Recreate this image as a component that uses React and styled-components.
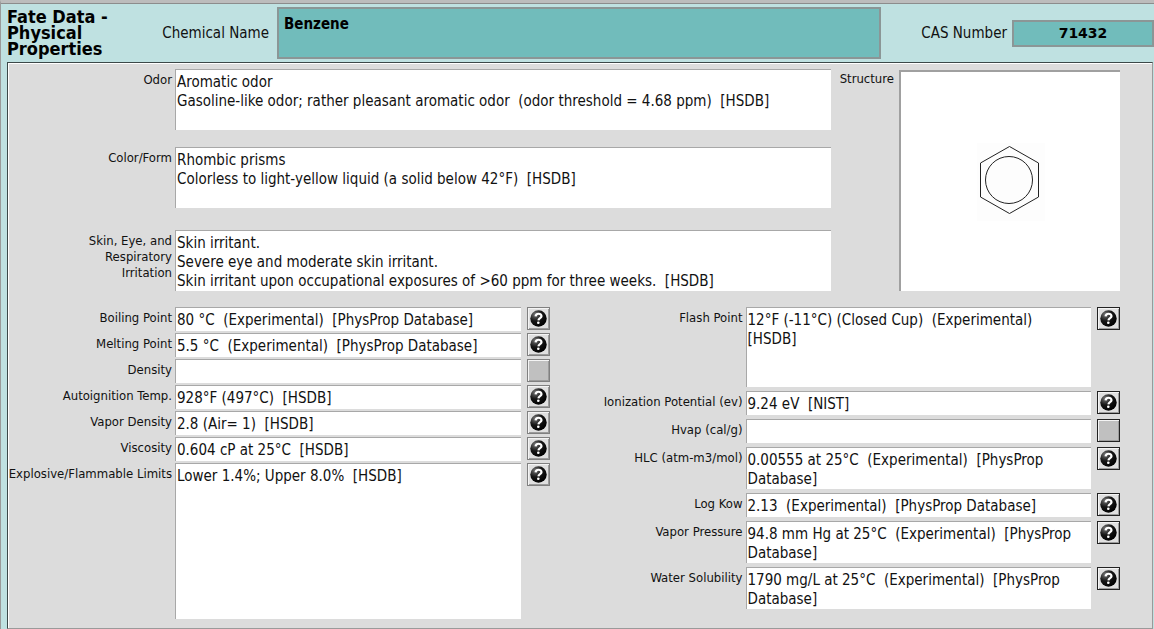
import React from "react";
import styled, { createGlobalStyle } from "styled-components";

const GlobalStyle = createGlobalStyle`
  * {
    box-sizing: border-box;
  }
  body {
    margin: 0;
    background-color: #bfe1e1;
    color: #111;
    font-family: "DejaVu Sans Condensed", "Noto Sans", sans-serif;
    font-size: 15px;
  }
  button,
  input,
  textarea {
    margin: 0;
    font: inherit;
    color: inherit;
  }
`;
const Window = styled.main`
  min-height: 100vh;
  display: flex;
  flex-direction: column;
  background-color: #bfe1e1;
  border-top: 3px solid #bcbcbc;
  border-left: 1px solid #9a9a9a;
`;
const Header = styled.header`
  display: flex;
  align-items: center;
  height: 59px;
  padding-left: 6px;
  border-top: 1px solid #8c8c8c;
`;
const Title = styled.h1`
  width: 140px;
  margin: 0;
  font-size: 18px;
  line-height: 16px;
  font-weight: bold;
  color: #000;
`;
const HeaderLabel = styled.label`
  width: ${({ $width }) => $width};
  font-size: 15px;
  text-align: right;
  white-space: nowrap;
`;
const HeaderField = styled.input`
  min-width: 0;
  border: 2px solid #8b9696;
  border-radius: 0;
  outline: none;
  background-color: #71bcbb;
  font-weight: bold;
  color: #000;
`;
const NameField = styled(HeaderField)`
  flex: 1;
  height: 52px;
  margin-left: 8px;
  padding: 0 5px 18px;
`;
const CasField = styled(HeaderField)`
  flex: 0 0 142px;
  height: 27px;
  margin-left: 5px;
  padding: 0;
  font-family: "DejaVu Sans", sans-serif;
  font-size: 14px;
  text-align: center;
`;
const Panel = styled.section`
  flex: 1;
  display: flex;
  flex-direction: column;
  gap: 16px;
  margin-left: 6px;
  margin-right: 1px;
  padding: 6px 32px 9px 0;
  background-color: #dcdcdc;
  border: 1px solid #9a9a9a;
  border-top: 1px solid #3c4848;
  border-left: 1px solid #3c4848;
  box-shadow: inset 1px 1px 0 #fff;
`;
const Columns = styled.div`
  display: flex;
`;
const Descriptions = styled.div`
  flex: 1;
  display: flex;
  flex-direction: column;
  gap: ${({ $gap }) => $gap};
`;
const Properties = styled.div`
  flex: 1 1 ${({ $basis }) => $basis};
  display: flex;
  flex-direction: column;
  gap: ${({ $gap }) => $gap};
`;
const Row = styled.div`
  display: flex;
  align-items: flex-start;
`;
const Label = styled.label`
  flex: none;
  width: ${({ $width }) => $width};
  padding: 3px 3px 0 0;
  font-size: 13px;
  line-height: 16px;
  text-align: right;
  white-space: pre-line;
`;
const Input = styled.input`
  flex: 1;
  min-width: 0;
  height: 24px;
  padding: 0 1px;
  border: 0;
  border-top: 1px solid #a8a8a8;
  border-left: 1px solid #a8a8a8;
  border-radius: 0;
  outline: none;
  background-color: #fff;
`;
const TextArea = styled.textarea`
  flex: 1;
  min-width: 0;
  padding: 3px 1px 0;
  border: 0;
  border-top: 1px solid #a8a8a8;
  border-left: 1px solid #a8a8a8;
  border-radius: 0;
  outline: none;
  resize: none;
  overflow: hidden;
  line-height: 19px;
  background-color: #fff;
`;
const HelpButton = styled.button`
  flex: none;
  display: flex;
  align-items: center;
  justify-content: center;
  width: 23px;
  height: 23px;
  margin-left: 6px;
  padding: 0;
  border: 1px solid ${({ $dark }) => ($dark ? "#222" : "#808080")};
  border-radius: 0;
  background-color: ${({ disabled }) => (disabled ? "#c0c0c0" : "#e0e0e0")};
  box-shadow: inset 1px 1px 0 #f4f4f4, inset -1px -1px 0 #9c9c9c;
`;
const StructureLabel = styled.div`
  width: 68px;
  padding: 2px 5px 0 0;
  font-size: 13px;
  line-height: 16px;
  text-align: right;
`;
const StructureBox = styled.div`
  display: flex;
  align-items: center;
  justify-content: center;
  width: 221px;
  height: 221px;
  margin-top: 1px;
  border-top: 2px solid #a0a0a0;
  border-left: 2px solid #a0a0a0;
  background-color: #fff;
`;

const appearance = [
  {
    id: "odor",
    label: "Odor",
    value: "Aromatic odor\nGasoline-like odor; rather pleasant aromatic odor  (odor threshold = 4.68 ppm)  [HSDB]",
  },
  {
    id: "color",
    label: "Color/Form",
    value: "Rhombic prisms\nColorless to light-yellow liquid (a solid below 42°F)  [HSDB]",
  },
];

const irritation = {
  id: "irritation",
  label: "Skin, Eye, and\nRespiratory\nIrritation",
  value:
    "Skin irritant.\nSevere eye and moderate skin irritant.\nSkin irritant upon occupational exposures of >60 ppm for three weeks.  [HSDB]",
};

const thermalProps = [
  { id: "boiling", label: "Boiling Point", value: "80 °C  (Experimental)  [PhysProp Database]" },
  { id: "melting", label: "Melting Point", value: "5.5 °C  (Experimental)  [PhysProp Database]" },
  { id: "density", label: "Density", value: "" },
  { id: "autoignition", label: "Autoignition Temp.", value: "928°F (497°C)  [HSDB]" },
  { id: "vapor-density", label: "Vapor Density", value: "2.8 (Air= 1)  [HSDB]" },
  { id: "viscosity", label: "Viscosity", value: "0.604 cP at 25°C  [HSDB]" },
  { id: "limits", label: "Explosive/Flammable Limits", value: "Lower 1.4%; Upper 8.0%  [HSDB]", rows: 8 },
];

const chemicalProps = [
  { id: "flash", label: "Flash Point", value: "12°F (-11°C) (Closed Cup)  (Experimental)\n[HSDB]", rows: 4 },
  { id: "ionization", label: "Ionization Potential (ev)", value: "9.24 eV  [NIST]" },
  { id: "hvap", label: "Hvap (cal/g)", value: "" },
  { id: "hlc", label: "HLC (atm-m3/mol)", value: "0.00555 at 25°C  (Experimental)  [PhysProp\nDatabase]", rows: 2 },
  { id: "kow", label: "Log Kow", value: "2.13  (Experimental)  [PhysProp Database]" },
  { id: "pressure", label: "Vapor Pressure", value: "94.8 mm Hg at 25°C  (Experimental)  [PhysProp\nDatabase]", rows: 2 },
  { id: "solubility", label: "Water Solubility", value: "1790 mg/L at 25°C  (Experimental)  [PhysProp\nDatabase]", rows: 2 },
];

const HelpIcon = () => (
  <svg width="17" height="17" viewBox="0 0 17 17" aria-hidden="true">
    <defs>
      <radialGradient id="ball" cx="0.3" cy="0.25" r="0.8">
        <stop offset="0" stopColor="#777" />
        <stop offset="0.5" stopColor="#161616" />
        <stop offset="1" stopColor="#000" />
      </radialGradient>
    </defs>
    <circle cx="8.5" cy="8.5" r="8.2" fill="url(#ball)" />
    <path
      d="M5.6 6.4C5.7 2.9 11.6 2.9 11.5 6.1C11.4 8.1 8.6 8 8.4 10.3"
      fill="none"
      stroke="#fff"
      strokeWidth="2.2"
    />
    <circle cx="8.3" cy="12.7" r="1.3" fill="#fff" />
  </svg>
);

const Benzene = () => (
  <svg width="68" height="78" viewBox="0 0 68 78" fill="none" stroke="#222" role="img" aria-label="Benzene ring">
    <rect width="68" height="78" fill="#fdfdfd" stroke="none" />
    <path d="M32.5 3.5L61.5 20V54L32.5 70.5L3.5 54V20Z" />
    <circle cx="32" cy="37" r="23.5" />
  </svg>
);

const Description = ({ item }) => (
  <Row>
    <Label htmlFor={item.id} $width="167px">
      {item.label}
    </Label>
    <TextArea id={item.id} rows={3} defaultValue={item.value} spellCheck={false} />
  </Row>
);

const Property = ({ item, labelWidth, dark }) => (
  <Row>
    <Label htmlFor={item.id} $width={labelWidth}>
      {item.label}
    </Label>
    {item.rows ? (
      <TextArea id={item.id} rows={item.rows} defaultValue={item.value} spellCheck={false} />
    ) : (
      <Input id={item.id} type="text" defaultValue={item.value} />
    )}
    <HelpButton type="button" $dark={dark} disabled={!item.value} aria-label={`${item.label} source`}>
      {item.value && <HelpIcon />}
    </HelpButton>
  </Row>
);

const App = () => (
  <>
    <GlobalStyle />
    <Window>
      <Header>
        <Title>Fate Data - Physical Properties</Title>
        <HeaderLabel htmlFor="chemical" $width="122px">
          Chemical Name
        </HeaderLabel>
        <NameField id="chemical" type="text" defaultValue="Benzene" />
        <HeaderLabel htmlFor="cas" $width="126px">
          CAS Number
        </HeaderLabel>
        <CasField id="cas" type="text" defaultValue="71432" />
      </Header>
      <Panel>
        <Columns>
          <Descriptions $gap="22px">
            <Descriptions $gap="17px">
              {appearance.map((item) => (
                <Description key={item.id} item={item} />
              ))}
            </Descriptions>
            <Description item={irritation} />
          </Descriptions>
          <StructureLabel>Structure</StructureLabel>
          <StructureBox>
            <Benzene />
          </StructureBox>
        </Columns>
        <Columns>
          <Properties $basis="196px" $gap="2px">
            {thermalProps.map((item) => (
              <Property key={item.id} item={item} labelWidth="167px" />
            ))}
          </Properties>
          <Properties $basis="225px" $gap="4px">
            {chemicalProps.map((item) => (
              <Property key={item.id} item={item} labelWidth="196px" dark />
            ))}
          </Properties>
        </Columns>
      </Panel>
    </Window>
  </>
);

export default App;
